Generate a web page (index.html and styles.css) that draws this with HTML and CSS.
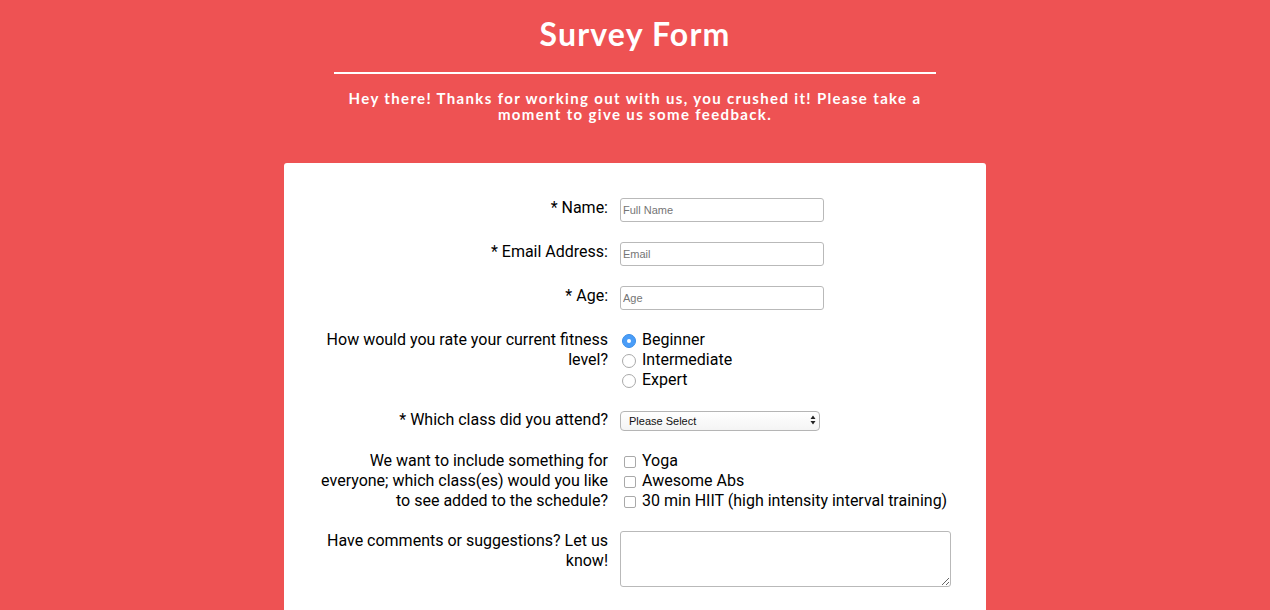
FILE: index.html
```html
<!DOCTYPE html>
<html>
<head>
<meta charset="utf-8">
<link rel="stylesheet" href="styles.css">
</head>
<body>
<header class="header">
  <h1 class="title">Survey Form</h1>
  <hr class="rule">
  <p class="intro">Hey there! Thanks for working out with us, you crushed it! Please take a<br>moment to give us some feedback.</p>
</header>
<main class="card">
  <form class="form">
    <div class="row">
      <label class="label label-input" for="name">* Name:</label>
      <div class="field"><input class="text" id="name" type="text" placeholder="Full Name"></div>
    </div>
    <div class="row">
      <label class="label label-input" for="email">* Email Address:</label>
      <div class="field"><input class="text" id="email" type="email" placeholder="Email"></div>
    </div>
    <div class="row">
      <label class="label label-input" for="age">* Age:</label>
      <div class="field"><input class="text" id="age" type="number" placeholder="Age"></div>
    </div>
    <div class="row">
      <div class="label">How would you rate your current fitness level?</div>
      <div class="field list">
        <label class="opt"><input class="radio" type="radio" name="lvl" checked><span>Beginner</span></label>
        <label class="opt"><input class="radio" type="radio" name="lvl"><span>Intermediate</span></label>
        <label class="opt"><input class="radio" type="radio" name="lvl"><span>Expert</span></label>
      </div>
    </div>
    <div class="row">
      <label class="label" for="cls">* Which class did you attend?</label>
      <div class="field">
        <div class="select-wrap">
          <select class="select" id="cls"><option>Please Select</option></select>
          <svg class="arrows" width="6" height="10" viewBox="0 0 6 10"><path d="M3 0.5 L5.5 4 H0.5 Z M3 9.5 L5.5 6 H0.5 Z" fill="#222"/></svg>
        </div>
      </div>
    </div>
    <div class="row row-checks">
      <div class="label">We want to include something for everyone; which class(es) would you like to see added to the schedule?</div>
      <div class="field list">
        <label class="opt"><input class="check" type="checkbox"><span>Yoga</span></label>
        <label class="opt"><input class="check" type="checkbox"><span>Awesome Abs</span></label>
        <label class="opt"><input class="check" type="checkbox"><span>30 min HIIT (high intensity interval training)</span></label>
      </div>
    </div>
    <div class="row">
      <label class="label" for="cmt">Have comments or suggestions? Let us know!</label>
      <div class="field"><textarea class="area" id="cmt"></textarea></div>
    </div>
  </form>
</main>
</body>
</html>
```

FILE: styles.css
```css
html, body {
  margin: 0;
  padding: 0;
}
body {
  background: #ee5253;
  font-family: Roboto, "Liberation Sans", sans-serif;
  color: #000;
  height: 610px;
  overflow: hidden;
}
.header {
  width: 602px;
  margin: 0 auto;
  padding-top: 14px;
  text-align: center;
  color: #fff;
  font-family: Lato, "DejaVu Sans", sans-serif;
}
.title {
  margin: 0;
  font-size: 32px;
  line-height: 40px;
  font-weight: 700;
  letter-spacing: 1.2px;
}
.rule {
  border: 0;
  height: 2px;
  background: #fff;
  margin: 18px 0 0;
}
.intro {
  margin: 16px -10px 0;
  font-size: 15px;
  line-height: 16px;
  font-weight: 700;
  letter-spacing: 1.35px;
  padding: 0;
  white-space: nowrap;
}
.card {
  width: 702px;
  margin: 41px auto 0;
  background: #fff;
  border-radius: 3px 3px 0 0;
  padding-top: 35px;
  min-height: 420px;
}
.form {
  display: flex;
  flex-direction: column;
  gap: 20px;
}
.row {
  display: grid;
  grid-template-columns: 324px 1fr;
  column-gap: 12px;
  align-items: start;
}
.row-checks {
  margin-top: 1px;
}
.label {
  text-align: right;
  font-size: 16px;
  line-height: 20px;
  padding-left: 20px;
}
.field {
  min-width: 0;
}
.text {
  box-sizing: border-box;
  width: 204px;
  height: 24px;
  border: 1px solid #b9b9b9;
  border-radius: 3px;
  padding: 0 2px;
  font-family: "Liberation Sans", Arial, sans-serif;
  font-size: 11px;
  margin: 0;
  outline: none;
}
.text::placeholder {
  color: #757575;
}
.text::-webkit-outer-spin-button,
.text::-webkit-inner-spin-button {
  -webkit-appearance: none;
  margin: 0;
}
.list {
  display: flex;
  flex-direction: column;
}
.opt {
  display: flex;
  align-items: center;
  font-size: 16px;
  line-height: 20px;
  height: 20px;
}
.radio {
  -webkit-appearance: none;
  appearance: none;
  box-sizing: border-box;
  width: 14px;
  height: 14px;
  margin: 0 6px 0 2px;
  border: 1px solid #a9a9a9;
  border-radius: 50%;
  background: #fff;
  position: relative;
  top: 1px;
}
.radio:checked {
  background: #4a9df8;
  border-color: #3a8ee8;
}
.radio:checked::after {
  content: "";
  position: absolute;
  width: 4px;
  height: 4px;
  border-radius: 50%;
  background: #fff;
  left: 4px;
  top: 4px;
}
.check {
  -webkit-appearance: none;
  appearance: none;
  box-sizing: border-box;
  width: 12px;
  height: 12px;
  margin: 0 6px 0 4px;
  border: 1px solid #a9a9a9;
  border-radius: 2px;
  background: #fff;
  position: relative;
  top: 1px;
}
.select-wrap {
  position: relative;
  width: 200px;
  height: 20px;
}
.select {
  -webkit-appearance: none;
  appearance: none;
  box-sizing: border-box;
  width: 200px;
  height: 20px;
  margin: 0;
  border: 1px solid #b5b5b5;
  border-radius: 4px;
  background: linear-gradient(#fff, #f4f4f4);
  font-family: "Liberation Sans", Arial, sans-serif;
  font-size: 11px;
  padding: 0 8px;
  color: #111;
  outline: none;
}
.arrows {
  position: absolute;
  right: 4px;
  top: 5px;
  pointer-events: none;
}
.area {
  box-sizing: border-box;
  width: 331px;
  height: 56px;
  margin: 0;
  border: 1px solid #b9b9b9;
  border-radius: 3px;
  display: block;
  outline: none;
  font-family: "Liberation Sans", Arial, sans-serif;
}
```
